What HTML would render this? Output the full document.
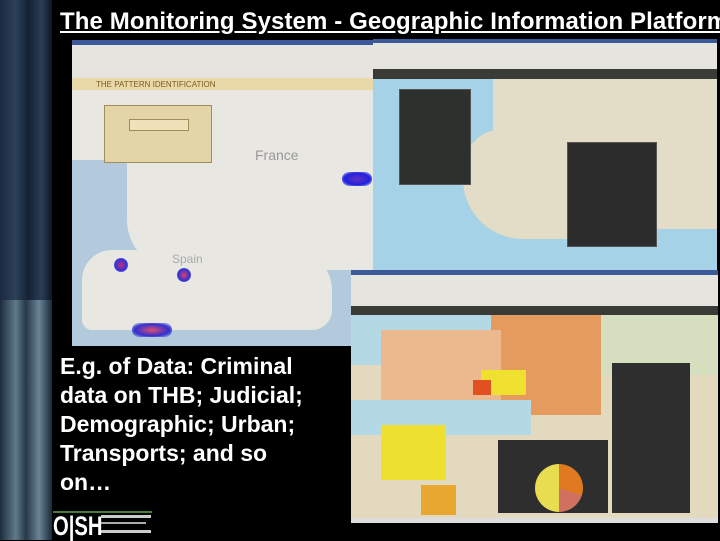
<!DOCTYPE html>
<html><head><meta charset="utf-8"><style>
*{margin:0;padding:0;box-sizing:border-box}
body{width:720px;height:540px;background:#000;position:relative;overflow:hidden;font-family:"Liberation Sans",sans-serif}
.a{position:absolute}
</style></head><body>
<div class="a" style="left:0;top:0;width:52px;height:540px;background:linear-gradient(90deg,#1a2a40 0%,#2c4058 30%,#142234 55%,#2a3e55 80%,#0c1624 100%)"></div>
<div class="a" style="left:0;top:300px;width:52px;height:240px;background:linear-gradient(90deg,#1c2c3c,#5f7a8c 30%,#26394a 50%,#6a8496 75%,#1a2a38)"></div>
<div class="a" style="left:60px;top:8px;color:#fff;font-weight:bold;font-size:24px;letter-spacing:0.1px;text-decoration:underline;white-space:nowrap">The Monitoring System - Geographic Information Platform</div>

<!-- screenshot 1 -->
<div class="a" style="left:72px;top:40px;width:303px;height:306px;background:#a9c4d6;overflow:hidden">
 <div class="a" style="left:0;top:0;width:303px;height:5px;background:#3c5a9a"></div>
 <div class="a" style="left:0;top:5px;width:303px;height:33px;background:#e6e4de"></div>
 <div class="a" style="left:0;top:38px;width:303px;height:12px;background:#ead9a8"></div>
 <div class="a" style="left:24px;top:40px;font-size:8px;color:#7a5a20">THE PATTERN IDENTIFICATION</div>
 <div class="a" style="left:0;top:50px;width:303px;height:256px;background:#b2cadb"></div>
 <div class="a" style="left:55px;top:50px;width:248px;height:180px;background:#e8e7e2;border-radius:0 0 0 50px"></div>
 <div class="a" style="left:0;top:50px;width:80px;height:70px;background:#e8e7e2"></div>
 <div class="a" style="left:10px;top:210px;width:250px;height:80px;background:#e8e7e2;border-radius:30px 40px 20px 10px"></div>
 <div class="a" style="left:183px;top:107px;font-size:14px;color:#999">France</div>
 <div class="a" style="left:100px;top:212px;font-size:12px;color:#aaa">Spain</div>
 <div class="a" style="left:32px;top:65px;width:108px;height:58px;background:#e3d5a8;border:1px solid #a08c5a"></div>
 <div class="a" style="left:57px;top:79px;width:60px;height:12px;background:#f0e2b8;border:1px solid #a08c5a"></div>
 <div class="a" style="left:42px;top:218px;width:14px;height:14px;border-radius:50%;background:radial-gradient(#c03070,#3030e0 60%,transparent)"></div>
 <div class="a" style="left:105px;top:228px;width:14px;height:14px;border-radius:50%;background:radial-gradient(#e04070,#3030d0 60%,transparent)"></div>
 <div class="a" style="left:60px;top:283px;width:40px;height:14px;border-radius:7px;background:radial-gradient(#e05070,#3030d0 60%,transparent)"></div>
 <div class="a" style="left:270px;top:132px;width:30px;height:14px;border-radius:7px;background:radial-gradient(#6030c0,#2020e0 60%,transparent)"></div>
</div>

<!-- screenshot 2 -->
<div class="a" style="left:373px;top:39px;width:344px;height:231px;background:#e3dcc6;overflow:hidden">
 <div class="a" style="left:0;top:0;width:344px;height:4px;background:#3c5a9a"></div>
 <div class="a" style="left:0;top:4px;width:344px;height:26px;background:#e6e4de"></div>
 <div class="a" style="left:0;top:30px;width:344px;height:10px;background:#3a3a36"></div>
 <div class="a" style="left:0;top:40px;width:120px;height:191px;background:#a5d2e6"></div>
 <div class="a" style="left:40px;top:190px;width:304px;height:41px;background:#a5d2e6"></div>
 <div class="a" style="left:90px;top:90px;width:120px;height:110px;background:#e3dcc6;border-radius:40px 0 0 60px"></div>
 <div class="a" style="left:26px;top:50px;width:72px;height:96px;background:#2e302e;border:1px solid #555"></div>
 <div class="a" style="left:194px;top:103px;width:90px;height:105px;background:#2c2c2c;border:1px solid #555"></div>
</div>

<!-- screenshot 3 -->
<div class="a" style="left:351px;top:270px;width:367px;height:253px;background:#e2d9bf;overflow:hidden">
 <div class="a" style="left:0;top:0;width:367px;height:5px;background:#3c5a9a"></div>
 <div class="a" style="left:0;top:5px;width:367px;height:31px;background:#e6e4de"></div>
 <div class="a" style="left:0;top:36px;width:367px;height:9px;background:#3a3a36"></div>
 <div class="a" style="left:0;top:45px;width:367px;height:50px;background:#b4d8e4"></div>
 <div class="a" style="left:230px;top:45px;width:137px;height:60px;background:#d5dfc0"></div>
 <div class="a" style="left:140px;top:45px;width:110px;height:100px;background:#e59a5e"></div>
 <div class="a" style="left:30px;top:60px;width:120px;height:70px;background:#ecb88e"></div>
 <div class="a" style="left:130px;top:100px;width:45px;height:25px;background:#f0e030"></div>
 <div class="a" style="left:122px;top:110px;width:18px;height:15px;background:#e05020"></div>
 <div class="a" style="left:0;top:130px;width:180px;height:35px;background:#b4d8e4"></div>
 <div class="a" style="left:30px;top:155px;width:65px;height:55px;background:#eee030"></div>
 <div class="a" style="left:70px;top:215px;width:35px;height:30px;background:#e8a830"></div>
 <div class="a" style="left:0;top:248px;width:367px;height:5px;background:#ddd"></div>
 <div class="a" style="left:261px;top:93px;width:78px;height:150px;background:#2e2e2e"></div>
 <div class="a" style="left:147px;top:170px;width:110px;height:73px;background:#2e2e2e"></div>
 <div class="a" style="left:184px;top:194px;width:48px;height:48px;border-radius:50%;background:conic-gradient(#e07a20 0 30%,#d07060 30% 50%,#e8dc50 50% 100%)"></div>
</div>

<div class="a" style="left:60px;top:352px;color:#fff;font-weight:bold;font-size:23px;line-height:29px">E.g. of Data: Criminal<br>data on THB; Judicial;<br>Demographic; Urban;<br>Transports; and so<br>on…</div>

<div class="a" style="left:53px;top:511px;width:99px;height:29px;background:#000;border-top:2px solid #4a7a30"></div>
<div class="a" style="left:53px;top:511px;font-size:27px;font-weight:bold;color:#fff;line-height:30px;transform:scaleX(0.75);transform-origin:left">O|SH</div>
<div class="a" style="left:101px;top:515px;width:50px;height:3px;background:#ccc"></div>
<div class="a" style="left:101px;top:522px;width:45px;height:2px;background:#aaa"></div>
<div class="a" style="left:101px;top:530px;width:50px;height:3px;background:#ccc"></div>
</body></html>
